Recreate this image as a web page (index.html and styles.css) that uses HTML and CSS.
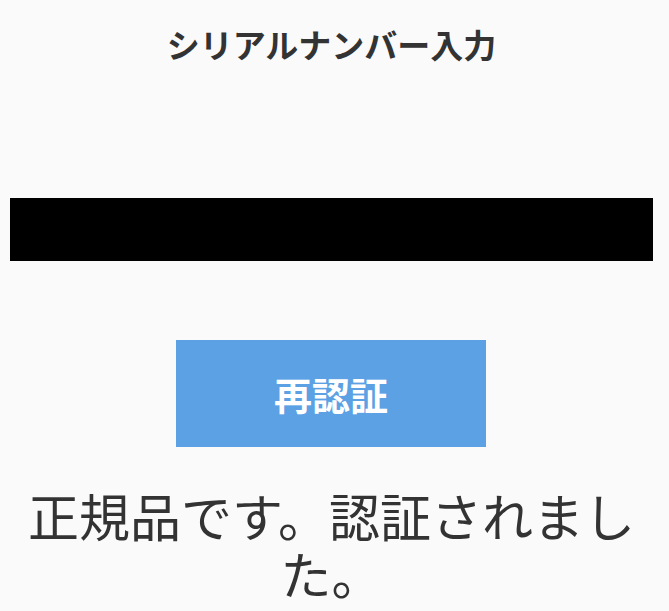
FILE: index.html
```html
<!DOCTYPE html>
<html lang="ja">
<head>
<meta charset="utf-8">
<link rel="stylesheet" href="styles.css">
</head>
<body>
<div class="page">
  <h1 class="title">シリアルナンバー入力</h1>
  <div class="serial-bar"></div>
  <div class="actions">
    <button class="reauth">再認証</button>
  </div>
  <p class="result">正規品です。認証されました。</p>
</div>
</body>
</html>
```

FILE: styles.css
```css
html, body {
  margin: 0;
  padding: 0;
  background: #fafafa;
}
body {
  font-family: "Noto Sans CJK JP", "Noto Sans", sans-serif;
  color: #333333;
}
.page {
  width: 643px;
  margin-left: 10px;
  display: flex;
  flex-direction: column;
}
.title {
  margin: 24px 0 0;
  font-size: 33px;
  line-height: 40px;
  font-weight: 700;
  text-align: center;
  color: #333333;
}
.serial-bar {
  margin-top: 134px;
  height: 63px;
  background: #000000;
}
.actions {
  margin-top: 79px;
  display: flex;
  justify-content: center;
}
.reauth {
  width: 310px;
  height: 107px;
  margin-right: 1px;
  border: none;
  background: #5ca1e3;
  color: #ffffff;
  font-family: "Noto Sans CJK JP", sans-serif;
  font-size: 38px;
  font-weight: 700;
  padding: 0;
}
.result {
  margin: 39px 0 0;
  font-size: 51px;
  line-height: 58px;
  text-align: center;
  color: #333333;
}
```
